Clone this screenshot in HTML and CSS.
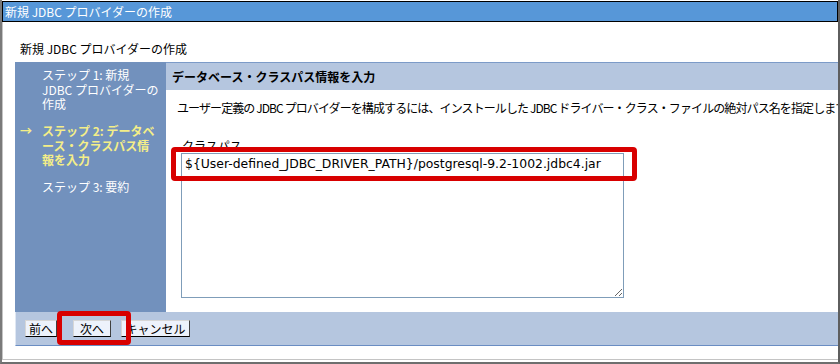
FILE: index.html
```html
<!DOCTYPE html>
<html lang="ja">
<head>
    <meta charset="UTF-8">
    <title>新規 JDBC プロバイダーの作成</title>
    <link rel="stylesheet" href="styles.css">
</head>
<body>
    <div class="window">
        <div class="titlebar">新規 JDBC プロバイダーの作成</div>

        <div class="content">
            <h1 class="page-title">新規 JDBC プロバイダーの作成</h1>

            <div class="wizard">
                <ul class="steps">
                    <li><span class="arrow"></span><span>ステップ 1: 新規 JDBC プロバイダーの作成</span></li>
                    <li class="current"><span class="arrow">→</span><span>ステップ 2: データベース・クラスパス情報を入力</span></li>
                    <li><span class="arrow"></span><span>ステップ 3: 要約</span></li>
                </ul>

                <div class="pane">
                    <div class="pane-head">データベース・クラスパス情報を入力</div>
                    <div class="pane-body">
                        <p class="desc">ユーザー定義の JDBC プロバイダーを構成するには、インストールした JDBC ドライバー・クラス・ファイルの絶対パス名を指定します。</p>
                        <label class="field-label" for="classpath">クラスパス</label>
                        <textarea id="classpath" class="field">${User-defined_JDBC_DRIVER_PATH}/postgresql-9.2-1002.jdbc4.jar</textarea>
                        <!-- red highlight drawn over the screenshot -->
                        <span class="mark mark-field"></span>
                    </div>
                </div>

                <div class="wizard-foot">
                    <button class="btn btn-prev">前へ</button>
                    <button class="btn btn-next">次へ</button>
                    <button class="btn btn-cancel">キャンセル</button>
                    <span class="mark mark-next"></span>
                </div>
            </div>
        </div>
    </div>
</body>
</html>
```

FILE: styles.css
```css
/* Basic Styling */
html, body {
    margin: 0;
    padding: 0;
    background-color: #ffffff;
}

body {
    font-family: "Noto Sans CJK JP", "DejaVu Sans", sans-serif;
    font-size: 12px;
    color: #000000;
}

.window {
    width: 840px;
    height: 364px;
    box-sizing: border-box;
    display: flex;
    flex-direction: column;
    border-left: 2px solid #7a7a7a;
    border-right: 2px solid #5e5e5e;
    border-bottom: 2px solid #6e6e6e;
    overflow: hidden;
}

.titlebar {
    height: 19px;
    line-height: 19px;
    margin-top: 1px;
    padding-left: 2px;
    background-color: #5797d8;
    border: 1px solid #000000;
    color: #ffffff;
    white-space: nowrap;
}

.content {
    flex: 1;
    margin-bottom: 2px;
    border-left: 1px solid #c4c4c4;
    border-bottom: 1px solid #c4c4c4;
    padding-top: 20px;
}

.page-title {
    margin: 0 0 6px 17px;
    font-size: 12px;
    font-weight: normal;
    line-height: 14px;
}

/* Wizard */
.wizard {
    margin-left: 12px;
    display: grid;
    grid-template-columns: 151px 1fr;
    grid-template-rows: 250px 34px;
}

.steps {
    margin: 0;
    padding: 6px 6px 0 0;
    list-style: none;
    background-color: #7291bd;
    color: #ffffff;
}

.steps li {
    display: grid;
    grid-template-columns: 27px 1fr;
    line-height: 14.5px;
    margin-bottom: 12.5px;
}

.steps .arrow {
    padding-left: 5px;
}

.steps .current {
    color: #f4ee88;
    font-weight: bold;
}

.pane {
    display: flex;
    flex-direction: column;
    min-width: 0;
}

.pane-head {
    height: 27px;
    line-height: 27px;
    padding-left: 6px;
    background-color: #b5c6df;
    border-top: 1px solid #7c9bc8;
    font-weight: bold;
    white-space: nowrap;
}

.pane-body {
    position: relative;
    flex: 1;
    padding: 11px 0 0 11px;
}

.desc {
    margin: 0;
    line-height: 14px;
    letter-spacing: -0.9px;
    white-space: nowrap;
    overflow: hidden;
}

.field-label {
    display: block;
    margin: 24px 0 0 5px;
    line-height: 14px;
}

.field {
    display: block;
    box-sizing: border-box;
    width: 443px;
    height: 145px;
    margin: 0 0 0 4px;
    padding: 3px 3px;
    border: 1px solid #7f9db9;
    font-family: "DejaVu Sans", sans-serif;
    font-size: 12.4px;
    line-height: 14px;
    color: #000000;
    resize: both;
    outline: none;
}

.wizard-foot {
    position: relative;
    grid-column: 1 / 3;
    display: flex;
    align-items: flex-start;
    padding: 8px 0 0 10px;
    background-color: #b5c6df;
    border-bottom: 1px solid #6a8dc3;
    border-left: 1px solid #dfe7f3;
}

.btn {
    box-sizing: border-box;
    height: 17px;
    padding: 0;
    font-family: "Noto Sans CJK JP", sans-serif;
    font-size: 12px;
    line-height: 14px;
    white-space: nowrap;
    text-align: center;
    color: #000000;
    background-color: #edf2fb;
    border: 1px solid;
    border-color: #d6d6d6 #404040 #000000 #d6d6d6;
    cursor: pointer;
}

.btn-prev {
    width: 32px;
    margin-left: -1px;
}

.btn-next {
    width: 38px;
    margin-left: 16px;
}

.btn-cancel {
    width: 69px;
    margin-left: 10px;
}

/* red annotation boxes */
.mark {
    position: absolute;
    box-sizing: border-box;
    border: 5px solid #d80000;
    border-radius: 4px;
    pointer-events: none;
}

.mark-field {
    left: 5px;
    top: 57px;
    width: 466px;
    height: 34px;
}

.mark-next {
    left: 41px;
    top: -1px;
    width: 74px;
    height: 34px;
}
```
